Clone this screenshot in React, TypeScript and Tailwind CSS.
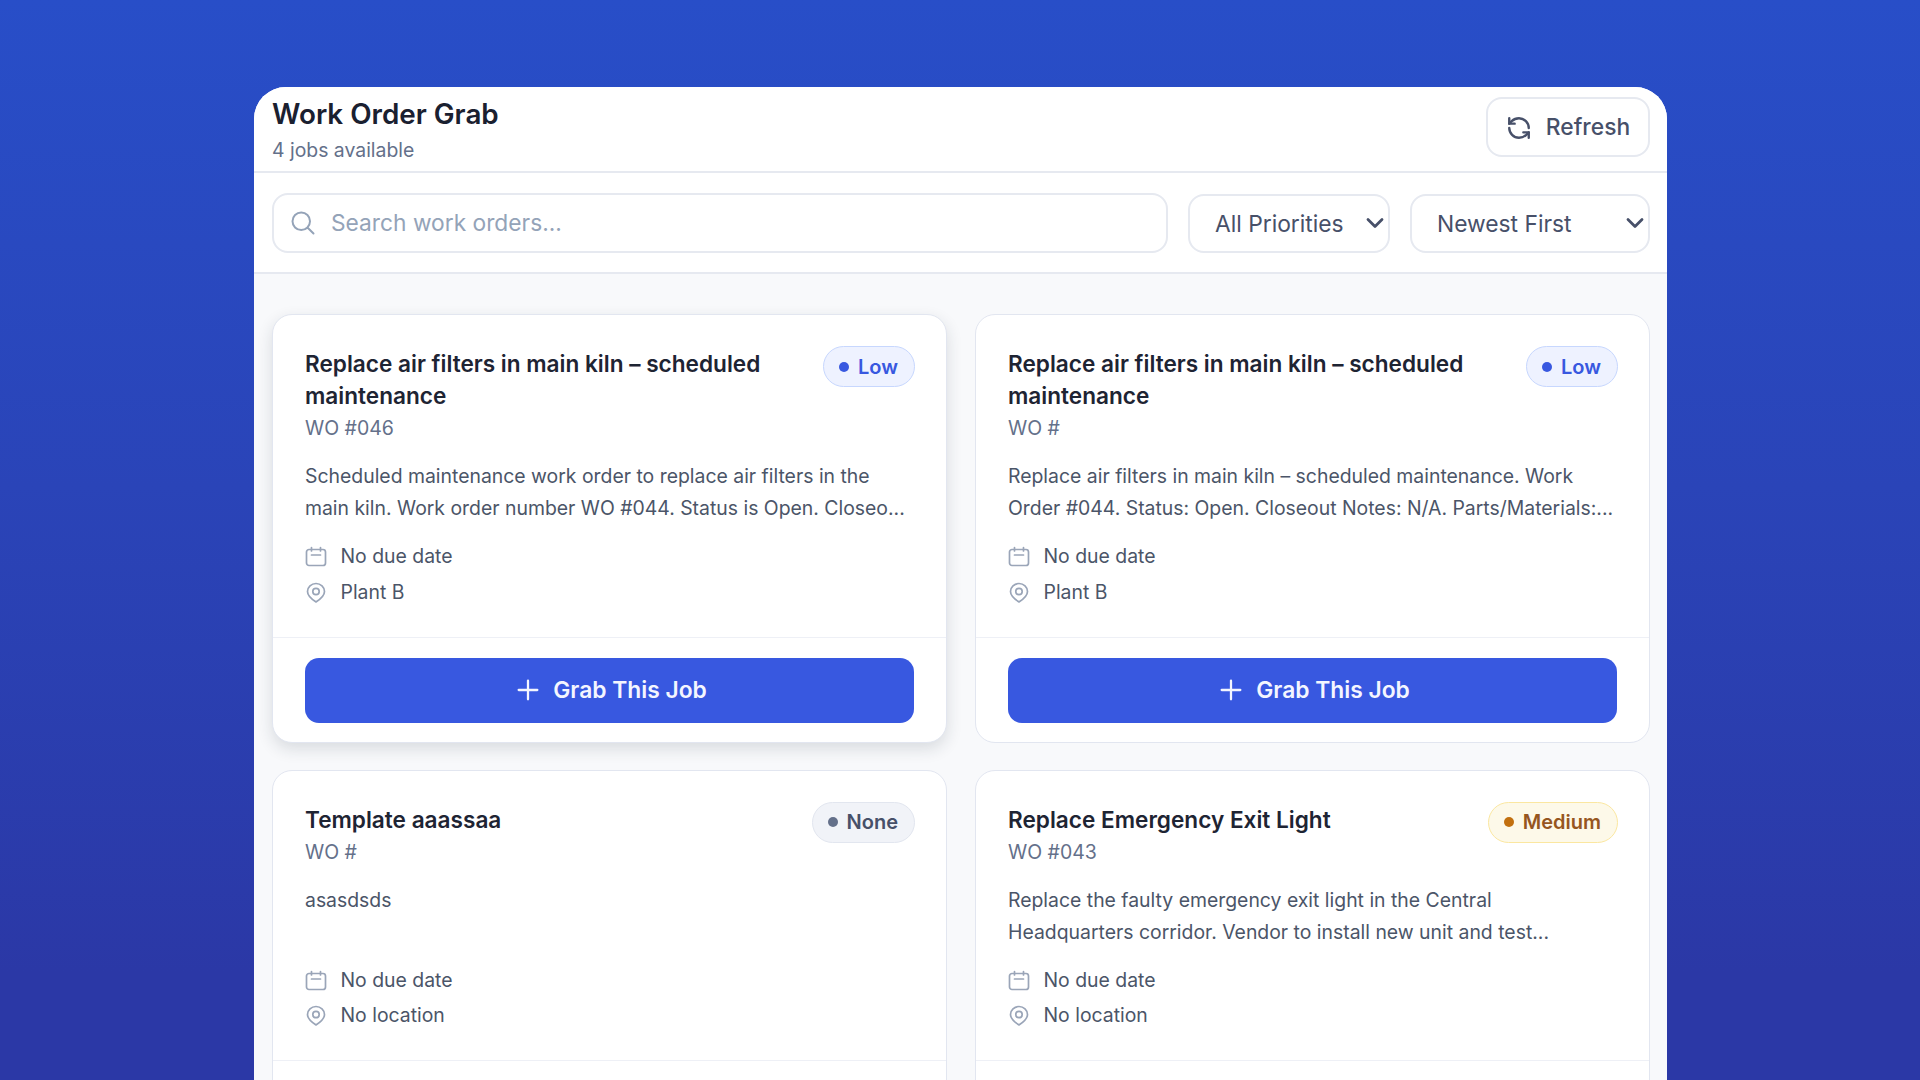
import { ChevronDown, Plus, RefreshCcw } from 'lucide-react';

type Priority = 'Low' | 'None' | 'Medium';

interface Job {
    title: string;
    number: string;
    description: string;
    location: string;
    priority: Priority;
    hovered?: boolean;
}

const jobs: Job[] = [
    {
        title: 'Replace air filters in main kiln – scheduled maintenance',
        number: 'WO #046',
        description: 'Scheduled maintenance work order to replace air filters in the main kiln. Work order number WO #044. Status is Open. Closeo...',
        location: 'Plant B',
        priority: 'Low',
        hovered: true,
    },
    {
        title: 'Replace air filters in main kiln – scheduled maintenance',
        number: 'WO #',
        description: 'Replace air filters in main kiln – scheduled maintenance. Work Order #044. Status: Open. Closeout Notes: N/A. Parts/Materials:...',
        location: 'Plant B',
        priority: 'Low',
    },
    {
        title: 'Template aaassaa',
        number: 'WO #',
        description: 'asasdsds',
        location: 'No location',
        priority: 'None',
    },
    {
        title: 'Replace Emergency Exit Light',
        number: 'WO #043',
        description: 'Replace the faulty emergency exit light in the Central Headquarters corridor. Vendor to install new unit and test...',
        location: 'No location',
        priority: 'Medium',
    },
];

function PriorityBadge({ priority }: { priority: Priority }) {
    const styles = {
        Low: 'bg-[#eef2ff] border-[#c7d7fe] text-[#3858e0]',
        None: 'bg-[#f1f3f8] border-[#e2e6ef] text-[#475069]',
        Medium: 'bg-[#fdf9e9] border-[#fbe7a0] text-[#96561f]',
    }[priority];
    const dot = {
        Low: 'bg-[#3858e0]',
        None: 'bg-[#64708a]',
        Medium: 'bg-[#c2700f]',
    }[priority];

    return (
        <span className={`-mt-[2px] -mr-px flex h-[41px] shrink-0 items-center gap-[9px] rounded-full border pr-[16px] pl-[15px] text-[20px] font-semibold ${styles}`}>
            <span className={`h-[10px] w-[10px] rounded-full ${dot}`} />
            {priority}
        </span>
    );
}

function SearchIcon() {
    return (
        <svg width="28" height="28" viewBox="0 0 24 24" fill="none" stroke="#94a3b8" strokeWidth="1.700" strokeLinecap="round" strokeLinejoin="round" className="shrink-0">
            <path d="M21 21l-5.197-5.197m0 0A7.500 7.500 0 1 0 5.196 5.196a7.500 7.500 0 0 0 10.607 10.607z" />
        </svg>
    );
}

function CalendarIcon() {
    return (
        <svg width="22" height="22" viewBox="0 0 22 22" fill="none" stroke="#9aa5b8" strokeWidth="1.7" strokeLinecap="round" strokeLinejoin="round">
            <rect x="1.500" y="4.500" width="19" height="16" rx="2.500" />
            <path d="M6.500 2.500v3.500M15.500 2.500v3.500M6.500 10h9" />
        </svg>
    );
}

function PinIcon() {
    return (
        <svg width="22" height="22" viewBox="0 0 22 22" fill="none" stroke="#9aa5b8" strokeWidth="1.7" strokeLinecap="round" strokeLinejoin="round">
            <path d="M11 21C8 19 2.500 15.500 2.500 10.500a8.500 8 0 0 1 17 0C19.500 15.500 14 19 11 21z" />
            <circle cx="11" cy="10.500" r="3.200" />
        </svg>
    );
}

function FilterSelect({ label, className }: { label: string; className: string }) {
    return (
        <div className={`mt-px flex h-[59px] items-center rounded-[16px] border-2 border-[#e6e9f0] bg-white ${className}`}>
            <select className="h-full min-w-0 flex-1 appearance-none bg-transparent pt-[2px] pl-[25px] text-[22.800px] text-[#475069] outline-none">
                <option>{label}</option>
            </select>
            <ChevronDown size={28} strokeWidth={2.400} className="-mr-px shrink-0 text-[#475069]" />
        </div>
    );
}

function JobCard({ job }: { job: Job }) {
    return (
        <div className={`flex flex-col rounded-[20px] border border-[#e2e6f0] bg-white ${job.hovered ? 'shadow-[0_6px_16px_rgba(30,41,59,0.14)]' : ''}`}>
            <div className="flex flex-col px-[32px] pt-[33px] pb-[29px]">
                <div className="flex items-start justify-between gap-[24px]">
                    <div className="min-w-0">
                        <h3 className="text-[22.600px] leading-[32px] font-semibold text-[#1e2433]">{job.title}</h3>
                        <div className="text-[19.500px] leading-[32px] text-[#64708a]">{job.number}</div>
                    </div>
                    <PriorityBadge priority={job.priority} />
                </div>
                <p className="mt-[16px] h-[64px] text-[19.400px] leading-[32px] text-[#4b5568]">{job.description}</p>
                <div className="mt-[16px] flex flex-col gap-[3.500px] text-[19.400px] leading-[32px] text-[#4b5568]">
                    <div className="flex items-center gap-[13.500px]">
                        <CalendarIcon />
                        No due date
                    </div>
                    <div className="flex items-center gap-[13.500px]">
                        <PinIcon />
                        {job.location}
                    </div>
                </div>
            </div>
            <div className="border-t border-[#eef0f6] px-[32px] pt-[20px] pb-[19px]">
                <button className="flex h-[65px] w-full items-center justify-center gap-[9px] rounded-[14px] bg-[#3858e0] text-[22.800px] font-semibold text-[#f4f6ff]">
                    <Plus size={32} strokeWidth={1.700} />
                    Grab This Job
                </button>
            </div>
        </div>
    );
}

export default function App() {
    return (
        <div className="h-screen overflow-hidden bg-[linear-gradient(180deg,#284ec8_0%,#2a44b8_45%,#2b38a6_90%)] pt-[87px] pl-[254px] font-['Inter',sans-serif]">
            <div className="flex w-[1413px] flex-col rounded-t-[32px] bg-[#f8f9fb]">
                <header className="flex h-[86px] items-start justify-between rounded-t-[32px] border-b-2 border-[#e6e9f0] bg-white pt-[9px] pr-[17px] pl-[18px]">
                    <div>
                        <h1 className="text-[27.800px] leading-[36px] font-semibold text-[#1a2030]">Work Order Grab</h1>
                        <p className="mt-[3.500px] text-[19.400px] leading-[28px] text-[#64708a]">4 jobs available</p>
                    </div>
                    <button className="mt-px flex h-[60px] w-[164px] items-center justify-center gap-[14px] rounded-[16px] border-2 border-[#e6e9f0] pt-px text-[22.800px] font-medium text-[#475069]">
                        <RefreshCcw size={26} strokeWidth={2.200} />
                        Refresh
                    </button>
                </header>
                <div className="flex h-[101px] items-center gap-[20px] border-b-2 border-[#e6e9f0] bg-white pr-[17px] pl-[18px]">
                    <div className="flex h-[60px] flex-1 items-center gap-[14px] rounded-[16px] border-2 border-[#e6e9f0] pr-[18px] pl-[15px]">
                        <SearchIcon />
                        <input
                            placeholder="Search work orders..."
                            className="w-full bg-transparent pt-[2px] text-[22.760px] outline-none placeholder:text-[#94a3b8]"
                        />
                    </div>
                    <FilterSelect label="All Priorities" className="w-[202px]" />
                    <FilterSelect label="Newest First" className="w-[240px]" />
                </div>
                <div className="grid grid-cols-2 gap-x-[28px] gap-y-[27px] pt-[40px] pr-[17px] pl-[18px]">
                    {jobs.map((job, i) => (
                        <JobCard key={i} job={job} />
                    ))}
                </div>
            </div>
        </div>
    );
}
